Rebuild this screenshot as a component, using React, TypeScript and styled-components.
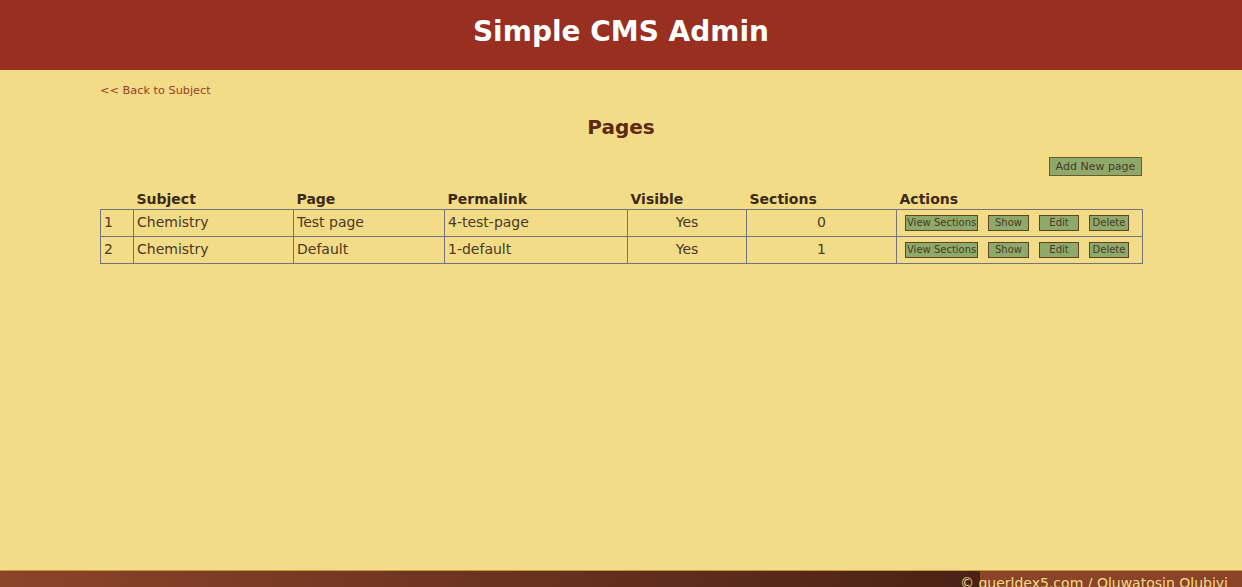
import React from "react";
import styled, { createGlobalStyle } from "styled-components";

const Global = createGlobalStyle`
  html, body { margin: 0; padding: 0; background: #f2dc87; }
  body { font-family: "DejaVu Sans", Verdana, sans-serif; }
`;

const Page = styled.div`
  display: flex;
  flex-direction: column;
  background: #f2dc87;
`;

const Header = styled.header`
  height: 70px;
  background: #982f21;
  display: flex;
  align-items: center;
  justify-content: center;
`;

const SiteTitle = styled.h1`
  margin: 0;
  color: #ffffff;
  font-size: 28px;
  font-weight: bold;
  line-height: 1;
  margin-top: -6px;
`;

const Main = styled.main`
  height: 500px;
  padding: 14px 100px 0;
  box-sizing: border-box;
  display: flex;
  flex-direction: column;
`;

const BackLink = styled.a`
  color: #9b3b26;
  font-size: 11.3px;
  line-height: 13px;
  text-decoration: none;
  align-self: flex-start;
`;

const Heading = styled.h2`
  margin: 18px 0 0;
  text-align: center;
  color: #5a2a14;
  font-size: 20px;
  line-height: 24px;
  font-weight: bold;
`;

const Toolbar = styled.div`
  display: flex;
  justify-content: flex-end;
  margin-top: 18px;
`;

const Button = styled.button<{ $small?: boolean; $w?: number }>`
  font-family: "DejaVu Sans", Verdana, sans-serif;
  font-size: ${(p) => (p.$small ? "10px" : "11px")};
  line-height: ${(p) => (p.$small ? "14px" : "17px")};
  padding: ${(p) => (p.$small ? "0 1px" : "0 4px")};
  width: ${(p) => (p.$w ? `${p.$w}px` : "auto")};
  background: #8fa96a;
  color: #4a3a26;
  border: 1px solid ${(p) => (p.$small ? "#5e4324" : "#6c5a2c")};
  cursor: pointer;
  white-space: nowrap;
`;

const Table = styled.table`
  margin-top: 14px;
  width: 1042px;
  border-collapse: collapse;
  table-layout: fixed;
`;

const HeadCell = styled.th`
  text-align: left;
  font-size: 14px;
  line-height: 17px;
  font-weight: bold;
  color: #3b2a15;
  padding: 1px 3px 1px;
`;

const Cell = styled.td<{ $center?: boolean }>`
  border: 1px solid #737378;
  font-size: 14px;
  line-height: 17px;
  color: #4b3824;
  padding: 4px 3px 5px 3px;
  height: 17px;
  text-align: ${(p) => (p.$center ? "center" : "left")};
`;

const Actions = styled.div`
  display: flex;
  gap: 10px;
  padding-left: 5px;
  margin-top: 1px;
`;

const Footer = styled.footer`
  height: 40px;
  box-sizing: border-box;
  padding: 4px 14px 0 0;
  text-align: right;
  color: #f2dc87;
  font-size: 14px;
  line-height: 16px;
  background: linear-gradient(to right, #8c4429, #4a2215) no-repeat 0 0 / 980px 100%, #8c4429;
  border-top: 1px solid #c9963c;
`;

const widths = [33, 160, 151, 183, 119, 150, 246];

const rows = [
  { id: 1, subject: "Chemistry", page: "Test page", permalink: "4-test-page", visible: "Yes", sections: 0 },
  { id: 2, subject: "Chemistry", page: "Default", permalink: "1-default", visible: "Yes", sections: 1 },
];

export default function App() {
  return (
    <Page>
      <Global />
      <Header>
        <SiteTitle>Simple CMS Admin</SiteTitle>
      </Header>
      <Main>
        <BackLink href="#">&lt;&lt; Back to Subject</BackLink>
        <Heading>Pages</Heading>
        <Toolbar>
          <Button $w={93}>Add New page</Button>
        </Toolbar>
        <Table>
          <colgroup>
            {widths.map((w, i) => (
              <col key={i} style={{ width: w }} />
            ))}
          </colgroup>
          <thead>
            <tr>
              <HeadCell></HeadCell>
              <HeadCell>Subject</HeadCell>
              <HeadCell>Page</HeadCell>
              <HeadCell>Permalink</HeadCell>
              <HeadCell>Visible</HeadCell>
              <HeadCell>Sections</HeadCell>
              <HeadCell>Actions</HeadCell>
            </tr>
          </thead>
          <tbody>
            {rows.map((r) => (
              <tr key={r.id}>
                <Cell>{r.id}</Cell>
                <Cell>{r.subject}</Cell>
                <Cell>{r.page}</Cell>
                <Cell>{r.permalink}</Cell>
                <Cell $center>{r.visible}</Cell>
                <Cell $center>{r.sections}</Cell>
                <Cell>
                  <Actions>
                    <Button $small $w={73}>View Sections</Button>
                    <Button $small $w={41}>Show</Button>
                    <Button $small $w={40}>Edit</Button>
                    <Button $small $w={40}>Delete</Button>
                  </Actions>
                </Cell>
              </tr>
            ))}
          </tbody>
        </Table>
      </Main>
      <Footer>© guerldex5.com / Oluwatosin Olubiyi</Footer>
    </Page>
  );
}
